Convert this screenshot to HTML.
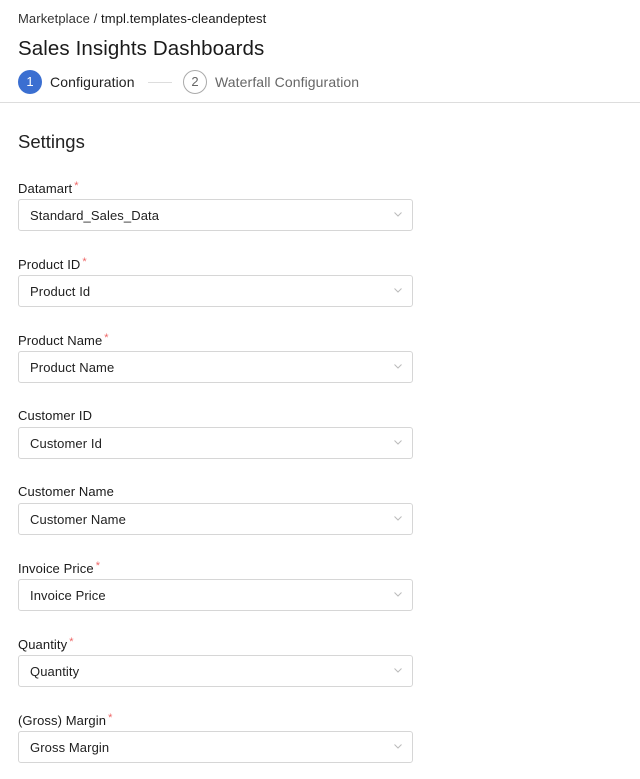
<!DOCTYPE html>
<html><head><meta charset="utf-8"><style>
*{box-sizing:border-box;margin:0;padding:0}
body{width:640px;height:779px;overflow:hidden;background:#fff;font-family:"Liberation Sans",sans-serif;color:#1f1f1f;position:relative}
.a{position:absolute;white-space:nowrap}
.bc{left:18px;top:11px;font-size:13px;color:#333;letter-spacing:0.1px}
.bc b{font-weight:normal;color:#1a1a1a}
.title{left:18px;top:37px;font-size:20.5px;color:#1a1a1a;letter-spacing:0.1px}
.c{position:absolute;width:24px;height:24px;border-radius:50%;font-size:13px;text-align:center;line-height:24px;top:70px}
.c1{left:18px;background:#3b6fd1;color:#fff}
.c2{left:183px;border:1px solid #aaa;color:#666;line-height:22px}
.s1{left:50px;top:74px;font-size:14px;color:#222;letter-spacing:0.1px}
.s2{left:215px;top:74px;font-size:14px;color:#666;letter-spacing:0.1px}
.line{position:absolute;left:148px;top:82px;width:24px;height:1px;background:#ddd}
.div{position:absolute;left:0;top:102px;width:640px;height:1px;background:#ddd}
.set{left:18px;top:131px;font-size:18.5px;color:#222}
.lab{position:absolute;left:18px;font-size:13px;color:#1a1a1a;letter-spacing:0.1px}
.lab i{color:#e66;font-style:normal;font-size:11px;vertical-align:4px;margin-left:2px}
.box{position:absolute;left:18px;width:395px;height:32px;border:1px solid #d6d6d6;border-radius:3px;font-size:13px;padding-left:11px;line-height:31px;color:#222;letter-spacing:0.1px}
.box svg{position:absolute;right:10px;top:12px}
</style></head><body>
<div class="a bc">Marketplace / <b>tmpl.templates-cleandeptest</b></div>
<div class="a title">Sales Insights Dashboards</div>
<div class="c c1">1</div><div class="a s1">Configuration</div>
<div class="line"></div>
<div class="c c2">2</div><div class="a s2">Waterfall Configuration</div>
<div class="div"></div>
<div class="a set">Settings</div>

<div class="lab" style="top:180px">Datamart<i>*</i></div>
<div class="box" style="top:199px">Standard_Sales_Data<svg width="8" height="5" viewBox="0 0 8 5"><path d="M0.5 0.5L4 4L7.5 0.5" fill="none" stroke="#bbb"/></svg></div>
<div class="lab" style="top:256px">Product ID<i>*</i></div>
<div class="box" style="top:275px">Product Id<svg width="8" height="5" viewBox="0 0 8 5"><path d="M0.5 0.5L4 4L7.5 0.5" fill="none" stroke="#bbb"/></svg></div>
<div class="lab" style="top:332px">Product Name<i>*</i></div>
<div class="box" style="top:351px">Product Name<svg width="8" height="5" viewBox="0 0 8 5"><path d="M0.5 0.5L4 4L7.5 0.5" fill="none" stroke="#bbb"/></svg></div>
<div class="lab" style="top:408px">Customer ID</div>
<div class="box" style="top:427px">Customer Id<svg width="8" height="5" viewBox="0 0 8 5"><path d="M0.5 0.5L4 4L7.5 0.5" fill="none" stroke="#bbb"/></svg></div>
<div class="lab" style="top:484px">Customer Name</div>
<div class="box" style="top:503px">Customer Name<svg width="8" height="5" viewBox="0 0 8 5"><path d="M0.5 0.5L4 4L7.5 0.5" fill="none" stroke="#bbb"/></svg></div>
<div class="lab" style="top:560px">Invoice Price<i>*</i></div>
<div class="box" style="top:579px">Invoice Price<svg width="8" height="5" viewBox="0 0 8 5"><path d="M0.5 0.5L4 4L7.5 0.5" fill="none" stroke="#bbb"/></svg></div>
<div class="lab" style="top:636px">Quantity<i>*</i></div>
<div class="box" style="top:655px">Quantity<svg width="8" height="5" viewBox="0 0 8 5"><path d="M0.5 0.5L4 4L7.5 0.5" fill="none" stroke="#bbb"/></svg></div>
<div class="lab" style="top:712px">(Gross) Margin<i>*</i></div>
<div class="box" style="top:731px">Gross Margin<svg width="8" height="5" viewBox="0 0 8 5"><path d="M0.5 0.5L4 4L7.5 0.5" fill="none" stroke="#bbb"/></svg></div>
</body></html>
